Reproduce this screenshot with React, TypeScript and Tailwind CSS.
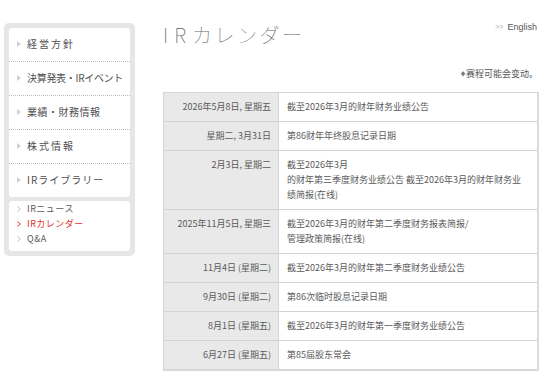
const FONT = "font-['Noto_Sans_CJK_JP','Noto_Sans_CJK_SC',sans-serif]";

const mainNav = [
  { label: "経営方針", track: "tracking-[2px]" },
  { label: "決算発表・IRイベント", track: "tracking-[-0.3px]" },
  { label: "業績・財務情報", track: "tracking-[0.5px]" },
  { label: "株式情報", track: "tracking-[2px]" },
  { label: "IRライブラリー", track: "tracking-[1px]" },
];

const subNav = [
  { label: "IRニュース", active: false },
  { label: "IRカレンダー", active: true },
  { label: "Q&A", active: false },
];

const rows: { date: string; lines: string[] }[] = [
  { date: "2026年5月8日, 星期五", lines: ["截至2026年3月的财年财务业绩公告"] },
  { date: "星期二, 3月31日", lines: ["第86财年年终股息记录日期"] },
  {
    date: "2月3日, 星期二",
    lines: [
      "截至2026年3月",
      "的财年第三季度财务业绩公告 截至2026年3月的财年财务业",
      "绩简报(在线)",
    ],
  },
  {
    date: "2025年11月5日, 星期三",
    lines: ["截至2026年3月的财年第二季度财务报表简报/", "管理政策简报(在线)"],
  },
  { date: "11月4日 (星期二)", lines: ["截至2026年3月的财年第二季度财务业绩公告"] },
  { date: "9月30日 (星期二)", lines: ["第86次临时股息记录日期"] },
  { date: "8月1日 (星期五)", lines: ["截至2026年3月的财年第一季度财务业绩公告"] },
  { date: "6月27日 (星期五)", lines: ["第85届股东常会"] },
];

function Triangle() {
  return (
    <svg width="4" height="6" viewBox="0 0 4 6" className="shrink-0">
      <path d="M0 0 L4 3 L0 6 Z" fill="#d0d0d0" />
    </svg>
  );
}

function Chevron({ red }: { red: boolean }) {
  return (
    <svg width="4" height="6" viewBox="0 0 4 6" className="shrink-0">
      <path d="M0.5 0.5 L3.3 3 L0.5 5.5" fill="none" stroke={red ? "#e0322d" : "#c4c4c4"} strokeWidth="1" />
    </svg>
  );
}

function Sidebar() {
  return (
    <div className="ml-[4px] mt-[23px] w-[131px] shrink-0 self-start rounded-[5px] bg-[#e6e6e6] p-[5px]">
      <div className="rounded-[3px] bg-white">
        {mainNav.map((item, i) => (
          <div
            key={item.label}
            className={`flex items-center pb-[2px] pl-[8px] ${
              i < mainNav.length - 1 ? "h-[34px] border-b border-dotted border-[#bdbdbd]" : "h-[33px]"
            }`}
          >
            <div className="w-[10px]">
              <Triangle />
            </div>
            <span className={`text-[10px] leading-[14px] text-[#505050] whitespace-nowrap ${item.track}`}>
              {item.label}
            </span>
          </div>
        ))}
      </div>
      <div className="mt-[4px] rounded-[3px] bg-white pb-[5px]">
        {subNav.map((item) => (
          <div key={item.label} className="flex h-[15px] items-center pl-[8px]">
            <div className="w-[10px]">
              <Chevron red={item.active} />
            </div>
            <span
              className={`text-[9px] leading-[15px] tracking-[0.5px] whitespace-nowrap ${
                item.active ? "text-[#e0322d]" : "text-[#5a5a5a]"
              }`}
            >
              {item.label}
            </span>
          </div>
        ))}
      </div>
    </div>
  );
}

function CalendarTable() {
  return (
    <div className="border-l border-t border-[#d4d4d4] border-r-2 border-b-2 border-r-[#dcdcdc] border-b-[#d8d8d8]">
      {rows.map((row, i) => (
        <div
          key={i}
          className={`flex ${i < rows.length - 1 ? "border-b border-[#d4d4d4]" : ""}`}
        >
          <div className="w-[115px] shrink-0 border-r border-[#d4d4d4] bg-[#e9e9e9] pr-[7px] pt-[6px] pb-[7px] text-right text-[9px] leading-[15px] text-[#5a5a5a] whitespace-nowrap">
            {row.date}
          </div>
          <div className="flex-1 bg-white pl-[8px] pr-[4px] pt-[6px] pb-[7px] text-[9px] leading-[15px] text-[#5a5a5a]">
            {row.lines.map((line, j) => (
              <div key={j} className="whitespace-nowrap">
                {line}
              </div>
            ))}
          </div>
        </div>
      ))}
    </div>
  );
}

export default function App() {
  return (
    <div className={`flex h-[384px] w-[550px] bg-white ${FONT}`}>
      <Sidebar />

      <div className="ml-[28px] w-[376px] pt-[21px]">
        <div className="flex items-start justify-between">
          <h1 className="mt-[2px] text-[20px] font-thin leading-[24px] tracking-[2.5px] text-[#666]">
            <span className="tracking-[6px]">IR</span>カレンダー
          </h1>
          <div className="mr-[2px] flex items-center gap-[4px] font-['Liberation_Sans',sans-serif] text-[9px] leading-[12px] text-[#555]">
            <span className="text-[7px] text-[#aaa]">&gt;&gt;</span>
            <span>English</span>
          </div>
        </div>

        <div className="mt-[21px] flex items-center justify-end pr-[1px] text-[9px] leading-[12px] text-[#555]">
          <span className="text-[6px] text-[#777]">♦</span>
          <span>赛程可能会变动。</span>
        </div>

        <div className="mt-[12px]">
          <CalendarTable />
        </div>
      </div>
    </div>
  );
}
